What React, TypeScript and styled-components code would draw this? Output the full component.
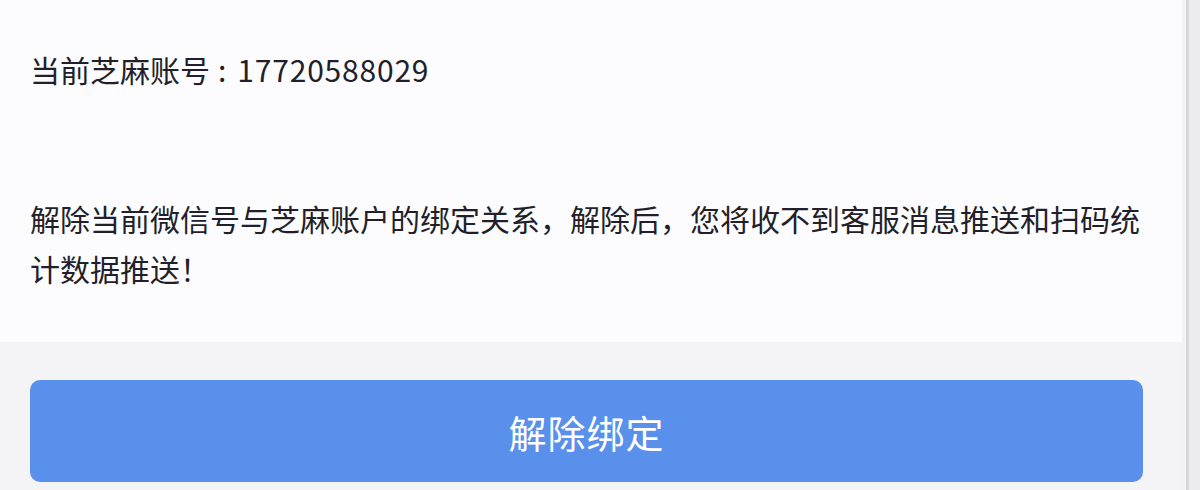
import { FC } from "react";
import styled, { createGlobalStyle } from "styled-components";

const GlobalStyle = createGlobalStyle`
  html, body {
    margin: 0;
    padding: 0;
    background: #f4f4f6;
  }
  body {
    font-family: "Noto Sans CJK SC", "Noto Sans", sans-serif;
  }
`;

const Page = styled.div`
  display: flex;
  width: 1200px;
  height: 490px;
  overflow: hidden;
`;

const Main = styled.div`
  width: 1182px;
  display: flex;
  flex-direction: column;
`;

const InfoPanel = styled.div`
  height: 342px;
  box-sizing: border-box;
  padding: 44px 30px 0 30px;
  background: #fcfcfe;
  color: #221f2a;
`;

const Account = styled.div`
  font-size: 30px;
  line-height: 50px;
`;

const Colon = styled.span`
  margin: 0 11px 0 8px;
`;

const Phone = styled.span`
  letter-spacing: 0.8px;
`;

const Notice = styled.p`
  margin: 99px 0 0 0;
  font-size: 30px;
  line-height: 50px;
`;

const Footer = styled.div`
  flex: 1;
  padding: 38px 39px 0 30px;
  background: #f4f4f6;
`;

const UnbindButton = styled.button`
  display: block;
  width: 100%;
  height: 102px;
  border: none;
  border-radius: 10px;
  background: #5990ec;
  color: #fff;
  font-family: inherit;
  font-size: 38px;
  letter-spacing: 1px;
  cursor: pointer;
`;

const Gutter = styled.div`
  width: 18px;
  background: #f2f2f4;
  padding-left: 4px;
  box-sizing: border-box;
`;

const Track = styled.div`
  height: 100%;
  border-left: 3px solid #d8d8da;
  background: #ececee;
`;

const App: FC = () => {
  return (
    <>
      <GlobalStyle />
      <Page>
        <Main>
          <InfoPanel>
            <Account>
              当前芝麻账号<Colon>:</Colon><Phone>17720588029</Phone>
            </Account>
            <Notice>
              解除当前微信号与芝麻账户的绑定关系，解除后，您将收不到客服消息推送和扫码统计数据推送！
            </Notice>
          </InfoPanel>
          <Footer>
            <UnbindButton>解除绑定</UnbindButton>
          </Footer>
        </Main>
        <Gutter>
          <Track />
        </Gutter>
      </Page>
    </>
  );
};

export default App;
